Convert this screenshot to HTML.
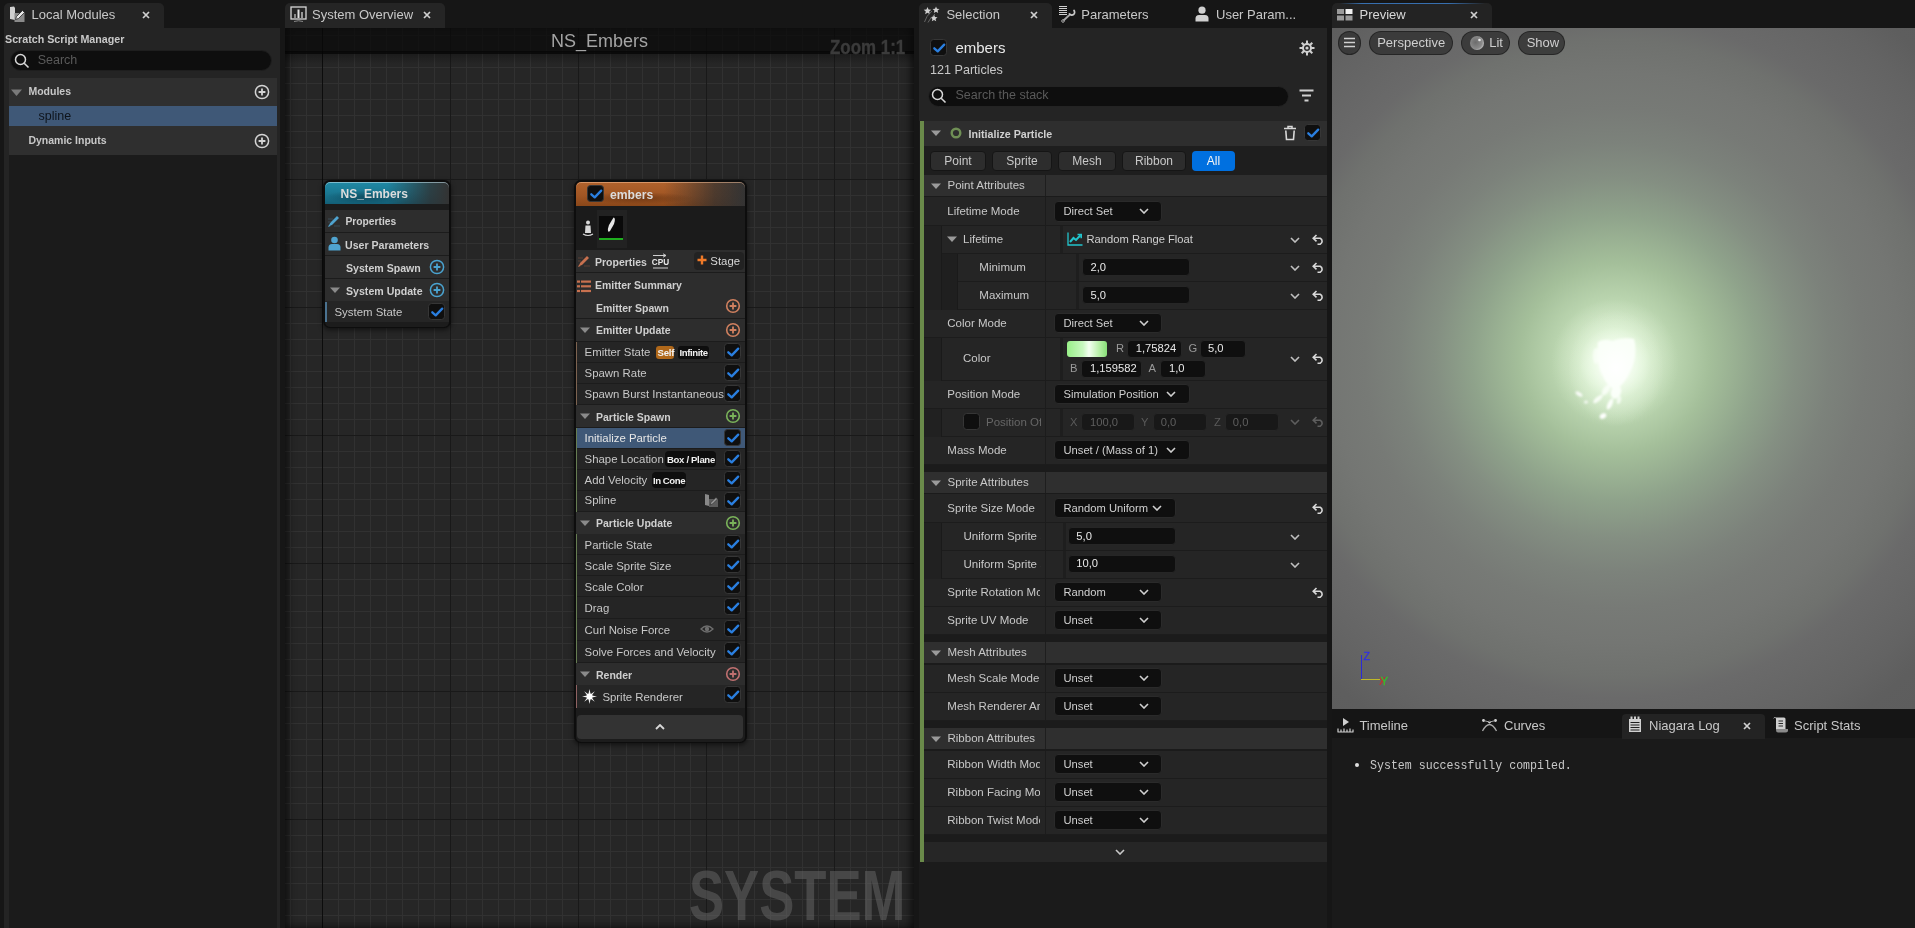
<!DOCTYPE html>
<html><head><meta charset="utf-8">
<style>
*{margin:0;padding:0;box-sizing:border-box}
html,body{width:1915px;height:928px;overflow:hidden;background:#161616;font-family:"Liberation Sans",sans-serif;color:#c0c0c0}
.a{position:absolute}
.t{position:absolute;white-space:nowrap;line-height:1;margin-top:1px}
</style></head><body>

<div style="position:absolute;left:0;top:0;width:1915px;height:928px;will-change:transform">
<div class="a" style="left:4px;top:3px;width:160px;height:25px;background:#242424;border-radius:5px 5px 0 0"></div>
<div class="a" style="left:4px;top:28px;width:276px;height:900px;background:#242424;"></div>
<svg class="a" style="left:8px;top:5px;" width="18" height="18" viewBox="0 0 18 18"><path d="M2 2 L6 1.5 L7 3 L7 15 L2 14 Z" fill="#d0d0d0"/><rect x="6.5" y="8" width="10" height="9" fill="#8a8a8a"/><path d="M7.5 14.5 L8.5 11.5 L14.5 5.5 L16.5 7.5 L10.5 13.5 Z" fill="#e8e8e8" stroke="#2a2a2a" stroke-width=".8"/></svg>
<div class="t" style="left:31.5px;top:6.95px;font-size:13px;color:#c8c8c8;">Local Modules</div>
<svg class="a" style="left:142px;top:11px;" width="8" height="8" viewBox="0 0 8 8"><path d="M1 1L7 7M7 1L1 7" stroke="#d0d0d0" stroke-width="1.7"/></svg>
<div class="t" style="left:5px;top:32.91px;font-size:10.7px;color:#c8c8c8;font-weight:bold;">Scratch Script Manager</div>
<div class="a" style="left:10px;top:50px;width:262px;height:21px;background:#0e0e0e;border-radius:11px;border:1px solid #1e1e1e"></div>
<svg class="a" style="left:14px;top:53px;" width="16" height="16" viewBox="0 0 16 16"><circle cx="6.5" cy="6.5" r="5" fill="none" stroke="#d8d8d8" stroke-width="1.5"/><path d="M10.2 10.2L14.5 14.5" stroke="#d8d8d8" stroke-width="1.6"/></svg>
<div class="t" style="left:37.7px;top:53.38px;font-size:12.5px;color:#5a5a5a;">Search</div>
<div class="a" style="left:9px;top:78px;width:268px;height:850px;background:#1b1b1b;"></div>
<div class="a" style="left:9px;top:78px;width:268px;height:28px;background:#2f2f2f;"></div>
<div class="a" style="left:9px;top:106px;width:268px;height:20px;background:#3f5877;"></div>
<div class="a" style="left:9px;top:126px;width:268px;height:29px;background:#2f2f2f;"></div>
<svg class="a" style="left:11px;top:89px;" width="11" height="7" viewBox="0 0 11 7"><path d="M0 0.5L11 0.5L5.5 7Z" fill="#7a7a7a"/></svg>
<div class="t" style="left:28.4px;top:85.08px;font-size:10.5px;color:#c8c8c8;font-weight:bold;">Modules</div>
<div class="t" style="left:38.5px;top:109.38px;font-size:12.5px;color:#0e141c;">spline</div>
<div class="t" style="left:28.4px;top:134.07px;font-size:10.5px;color:#c8c8c8;font-weight:bold;">Dynamic Inputs</div>
<svg class="a" style="left:254px;top:84px;" width="16" height="16" viewBox="0 0 16 16"><circle cx="8" cy="8" r="6.6" fill="none" stroke="#d4d4d4" stroke-width="1.5"/><path d="M8 4.6V11.4M4.6 8H11.4" stroke="#d4d4d4" stroke-width="1.8"/></svg>
<svg class="a" style="left:254px;top:133px;" width="16" height="16" viewBox="0 0 16 16"><circle cx="8" cy="8" r="6.6" fill="none" stroke="#d4d4d4" stroke-width="1.5"/><path d="M8 4.6V11.4M4.6 8H11.4" stroke="#d4d4d4" stroke-width="1.8"/></svg>
<div class="a" style="left:285px;top:3px;width:160px;height:25px;background:#252525;border-radius:5px 5px 0 0"></div>
<svg class="a" style="left:290px;top:6px;" width="17" height="17" viewBox="0 0 17 17"><rect x="1" y="1" width="15" height="12" fill="none" stroke="#d8d8d8" stroke-width="1.3"/><rect x="4" y="8" width="2" height="4" fill="#888"/><rect x="7.5" y="3.5" width="2" height="8.5" fill="#e0e0e0"/><rect x="11" y="6" width="2" height="6" fill="#999"/><path d="M4 15.5Q8.5 14 13 15.5" stroke="#888" stroke-width="1" fill="none"/></svg>
<div class="t" style="left:312px;top:6.95px;font-size:13px;color:#c8c8c8;">System Overview</div>
<svg class="a" style="left:423px;top:11px;" width="8" height="8" viewBox="0 0 8 8"><path d="M1 1L7 7M7 1L1 7" stroke="#d0d0d0" stroke-width="1.7"/></svg>
<div class="a" style="left:285px;top:28px;width:629px;height:900px;background-color:#262626;
background-image:linear-gradient(to right,#0c0c0c 1px,transparent 1px),linear-gradient(to right,#191919 1px,transparent 1px),linear-gradient(to bottom,#191919 1px,transparent 1px),linear-gradient(to right,#313131 1px,transparent 1px),linear-gradient(to bottom,#313131 1px,transparent 1px);
background-size:1px 100%,128px 100%,100% 128px,16px 100%,100% 16px;background-position:37px 0,37px 0,0 23px,5px 0,0 7px;background-repeat:no-repeat,repeat,repeat,repeat,repeat"></div>
<div class="a" style="left:285px;top:28px;width:629px;height:900px;background:transparent;box-shadow:inset 7px 0 7px -3px rgba(0,0,0,.5),inset -7px 0 7px -3px rgba(0,0,0,.5),inset 0 -5px 6px -3px rgba(0,0,0,.25)"></div>
<div class="a" style="left:285px;top:54px;width:629px;height:10px;background:linear-gradient(rgba(0,0,0,.28),rgba(0,0,0,0));"></div>
<div class="a" style="left:285px;top:28px;width:629px;height:26px;background:rgba(8,8,8,.72);border-bottom:3px solid rgba(0,0,0,.35)"></div>
<div class="t" style="left:551px;top:30.70px;font-size:18px;color:#a4a4a4;">NS_Embers</div>
<div class="t" style="left:830px;top:35.58px;font-size:20.5px;color:#3b3b3b;font-weight:bold;transform:scaleX(.825);transform-origin:0 0;-webkit-text-stroke:.4px #3b3b3b">Zoom 1:1</div>
<div class="t" style="left:689px;top:859.83px;font-size:70.2px;color:rgba(112,112,112,.45);font-weight:bold;transform:scaleX(.75);transform-origin:0 0">SYSTEM</div>
<div class="a" style="left:322.5px;top:180px;width:128.5px;height:148px;background:#0d0d0d;border-radius:7px;box-shadow:0 2px 5px rgba(0,0,0,.55)"></div>
<div class="a" style="left:325px;top:182px;width:124px;height:145px;background:#1c1c1c;border-radius:5px"></div>
<div class="a" style="left:325px;top:182px;width:124px;height:22px;background:radial-gradient(ellipse 40px 7px at 40px 15px,rgba(0,20,30,.35),rgba(0,20,30,0)),linear-gradient(to right,rgba(42,42,42,0) 0%,rgba(42,42,42,0) 50%,rgba(48,48,48,.8) 85%,#333 100%),linear-gradient(to bottom,#2089a5 0%,#1a7892 50%,#135f77 100%);border-radius:5px 5px 0 0;box-shadow:inset 0 1px 0 rgba(200,230,240,.55)"></div>
<div class="t" style="left:340.6px;top:186.80px;font-size:12px;color:#dcdcdc;font-weight:bold;">NS_Embers</div>
<div class="a" style="left:325px;top:210px;width:124px;height:22px;background:#2d2d2d;"></div>
<div class="a" style="left:325px;top:233px;width:124px;height:22px;background:#2d2d2d;"></div>
<div class="a" style="left:325px;top:256px;width:124px;height:22px;background:#2d2d2d;"></div>
<div class="a" style="left:325px;top:279px;width:124px;height:22px;background:#2d2d2d;"></div>
<div class="a" style="left:325px;top:301px;width:124px;height:21px;background:#252525;"></div>
<div class="a" style="left:325px;top:302px;width:2px;height:20px;background:#4a7290;"></div>
<svg class="a" style="left:327px;top:214px;" width="14" height="14" viewBox="0 0 14 14"><path d="M2 12L3 9L10 2L12 4L5 11Z" fill="#4fa3cf"/><path d="M1 13L2.2 10.5L3.6 11.9Z" fill="#4fa3cf"/><path d="M1 5H6M1 8H4M7 12H13" stroke="#3a4a55" stroke-width="1"/></svg>
<div class="t" style="left:345.4px;top:215.94px;font-size:10.3px;color:#cfcfcf;font-weight:bold;">Properties</div>
<svg class="a" style="left:328px;top:236px;" width="13" height="15" viewBox="0 0 13 15"><circle cx="6.5" cy="4" r="3.3" fill="#4fa3cf"/><path d="M0.5 14.5V11.5Q0.5 8 4 8H9Q12.5 8 12.5 11.5V14.5Z" fill="#4fa3cf"/></svg>
<div class="t" style="left:345px;top:238.59px;font-size:10.6px;color:#cfcfcf;font-weight:bold;">User Parameters</div>
<div class="t" style="left:346px;top:261.89px;font-size:10.6px;color:#cfcfcf;font-weight:bold;">System Spawn</div>
<svg class="a" style="left:429px;top:259px;" width="16" height="16" viewBox="0 0 16 16"><circle cx="8" cy="8" r="6.6" fill="none" stroke="#4aa3d0" stroke-width="1.5"/><path d="M8 4.6V11.4M4.6 8H11.4" stroke="#4aa3d0" stroke-width="1.8"/></svg>
<svg class="a" style="left:330px;top:287px;" width="10" height="6" viewBox="0 0 10 6"><path d="M0 0.5L10 0.5L5.0 6Z" fill="#8a8a8a"/></svg>
<div class="t" style="left:346px;top:284.59px;font-size:10.6px;color:#cfcfcf;font-weight:bold;">System Update</div>
<svg class="a" style="left:429px;top:282px;" width="16" height="16" viewBox="0 0 16 16"><circle cx="8" cy="8" r="6.6" fill="none" stroke="#4aa3d0" stroke-width="1.5"/><path d="M8 4.6V11.4M4.6 8H11.4" stroke="#4aa3d0" stroke-width="1.8"/></svg>
<div class="t" style="left:334.5px;top:306.31px;font-size:11.4px;color:#c8c8c8;">System State</div>
<svg class="a" style="left:428.3px;top:303.2px;" width="17" height="17" viewBox="0 0 17 17"><rect x="0.5" y="0.5" width="16" height="16" rx="3" fill="#0f0f0f" stroke="#363636" stroke-width="1"/><path d="M4.3 9.3L7.7 12.4L14.2 5.6" fill="none" stroke="#2a7fe0" stroke-width="2.3" stroke-linecap="round" stroke-linejoin="round"/></svg>
<div class="a" style="left:573.5px;top:180px;width:173.5px;height:563px;background:#0d0d0d;border-radius:7px;box-shadow:0 2px 5px rgba(0,0,0,.55)"></div>
<div class="a" style="left:575.5px;top:182px;width:169.5px;height:560px;background:#1c1c1c;border-radius:5px"></div>
<div class="a" style="left:575.5px;top:182px;width:169.5px;height:24px;background:radial-gradient(ellipse 55px 6px at 62px 16px,rgba(40,15,0,.35),rgba(40,15,0,0)),linear-gradient(to right,rgba(42,42,42,0) 0%,rgba(42,42,42,0) 52%,rgba(48,48,48,.75) 82%,#333 100%),linear-gradient(to bottom,#b0622c 0%,#a15624 55%,#8a4719 100%);border-radius:5px 5px 0 0;box-shadow:inset 0 1px 0 rgba(255,200,160,.5)"></div>
<svg class="a" style="left:587.3px;top:185.2px;" width="17" height="17" viewBox="0 0 17 17"><rect x="0.5" y="0.5" width="16" height="16" rx="3" fill="#0f0f0f" stroke="#363636" stroke-width="1"/><path d="M4.3 9.3L7.7 12.4L14.2 5.6" fill="none" stroke="#2a7fe0" stroke-width="2.3" stroke-linecap="round" stroke-linejoin="round"/></svg>
<div class="t" style="left:610px;top:187.63px;font-size:12.2px;color:#dcdcdc;font-weight:bold;">embers</div>
<div class="a" style="left:575.5px;top:206px;width:169.5px;height:44px;background:#1b1b1b;"></div>
<div class="a" style="left:597px;top:210px;width:30px;height:38px;background:#222222;"></div>
<div class="a" style="left:599px;top:216px;width:24px;height:22px;background:#0a0a0a;"></div>
<div class="a" style="left:599px;top:238px;width:24px;height:2px;background:#1fae1f;"></div>
<svg class="a" style="left:603px;top:216px;" width="16" height="20" viewBox="0 0 16 20"><path d="M10.5 1.5Q13 2 11 8L7 15Q5.5 16.5 5 15Q4.5 13 6 9Z" fill="#e6e6e6"/></svg>
<svg class="a" style="left:582px;top:220px;" width="12" height="17" viewBox="0 0 12 17"><circle cx="6" cy="2.6" r="2" fill="#d8d8d8"/><path d="M3.5 5.5H8.5L9 13H3Z" fill="#d8d8d8"/><path d="M1 14Q6 17 11 14" stroke="#d8d8d8" stroke-width="1.2" fill="none"/></svg>
<div class="a" style="left:575.5px;top:250px;width:169.5px;height:22px;background:#2d2d2d;"></div>
<svg class="a" style="left:577px;top:254px;" width="14" height="14" viewBox="0 0 14 14"><path d="M2 12L3 9L10 2L12 4L5 11Z" fill="#c8714f"/><path d="M1 13L2.2 10.5L3.6 11.9Z" fill="#c8714f"/><path d="M1 4H6M1 7H4M7 12H13" stroke="#5a4036" stroke-width="1"/></svg>
<div class="t" style="left:595px;top:256.07px;font-size:10.5px;color:#cfcfcf;font-weight:bold;">Properties</div>
<svg class="a" style="left:652px;top:253px;" width="17" height="16" viewBox="0 0 17 16"><path d="M1 2.5H14M11 0.8L14 2.5L11 4.2" stroke="#cfcfcf" stroke-width="1" fill="none"/><text x="8.5" y="12.3" font-family="Liberation Sans" font-weight="bold" font-size="8.2" fill="#e8e8e8" text-anchor="middle">CPU</text><path d="M1 15H16" stroke="#cfcfcf" stroke-width="1"/></svg>
<div class="a" style="left:694px;top:252px;width:50px;height:18px;background:#222222;border-radius:4px"></div>
<svg class="a" style="left:697px;top:255px;" width="10" height="10" viewBox="0 0 10 10"><path d="M5 0.5V9.5M0.5 5H9.5" stroke="#f07a28" stroke-width="2.4"/></svg>
<div class="t" style="left:710.3px;top:255.31px;font-size:11.4px;color:#d8d8d8;">Stage</div>
<div class="a" style="left:575.5px;top:273px;width:169.5px;height:22px;background:#2d2d2d;"></div>
<svg class="a" style="left:577px;top:279.5px;" width="14" height="13" viewBox="0 0 14 13"><rect x="0" y="0.5" width="3" height="2.2" fill="#c8714f"/><rect x="4" y="0.5" width="10" height="2.2" fill="#c8714f"/><rect x="0" y="5.2" width="3" height="2.2" fill="#c8714f"/><rect x="4" y="5.2" width="10" height="2.2" fill="#c8714f"/><rect x="0" y="9.9" width="3" height="2.2" fill="#c8714f"/><rect x="4" y="9.9" width="10" height="2.2" fill="#c8714f"/></svg>
<div class="t" style="left:595px;top:278.57px;font-size:10.5px;color:#cfcfcf;font-weight:bold;">Emitter Summary</div>
<div class="a" style="left:575.5px;top:295px;width:169.5px;height:23px;background:#2d2d2d;"></div>
<div class="t" style="left:596px;top:301.77px;font-size:10.5px;color:#cfcfcf;font-weight:bold;">Emitter Spawn</div>
<svg class="a" style="left:725px;top:298.2px;" width="16" height="16" viewBox="0 0 16 16"><circle cx="8" cy="8" r="6.3" fill="none" stroke="#d0805f" stroke-width="1.6"/><path d="M8 4.6V11.4M4.6 8H11.4" stroke="#d0805f" stroke-width="1.8"/></svg>
<div class="a" style="left:575.5px;top:319px;width:169.5px;height:22px;background:#2d2d2d;"></div>
<svg class="a" style="left:580px;top:327px;" width="10" height="6" viewBox="0 0 10 6"><path d="M0 0.5L10 0.5L5.0 6Z" fill="#8a8a8a"/></svg>
<div class="t" style="left:596px;top:324.38px;font-size:10.5px;color:#cfcfcf;font-weight:bold;">Emitter Update</div>
<svg class="a" style="left:725px;top:321.7px;" width="16" height="16" viewBox="0 0 16 16"><circle cx="8" cy="8" r="6.3" fill="none" stroke="#d0805f" stroke-width="1.6"/><path d="M8 4.6V11.4M4.6 8H11.4" stroke="#d0805f" stroke-width="1.8"/></svg>
<div class="a" style="left:575.5px;top:342px;width:169.5px;height:20px;background:#252525;"></div>
<div class="t" style="left:584.6px;top:346.31px;font-size:11.4px;color:#c8c8c8;">Emitter State</div>
<svg class="a" style="left:724.3px;top:343.2px;" width="17" height="17" viewBox="0 0 17 17"><rect x="0.5" y="0.5" width="16" height="16" rx="3" fill="#0f0f0f" stroke="#363636" stroke-width="1"/><path d="M4.3 9.3L7.7 12.4L14.2 5.6" fill="none" stroke="#2a7fe0" stroke-width="2.3" stroke-linecap="round" stroke-linejoin="round"/></svg>
<div class="a" style="left:575.5px;top:363px;width:169.5px;height:20px;background:#252525;"></div>
<div class="t" style="left:584.6px;top:366.71px;font-size:11.4px;color:#c8c8c8;">Spawn Rate</div>
<svg class="a" style="left:724.3px;top:364.2px;" width="17" height="17" viewBox="0 0 17 17"><rect x="0.5" y="0.5" width="16" height="16" rx="3" fill="#0f0f0f" stroke="#363636" stroke-width="1"/><path d="M4.3 9.3L7.7 12.4L14.2 5.6" fill="none" stroke="#2a7fe0" stroke-width="2.3" stroke-linecap="round" stroke-linejoin="round"/></svg>
<div class="a" style="left:575.5px;top:384px;width:169.5px;height:20px;background:#252525;"></div>
<div class="t" style="left:584.6px;top:387.71px;font-size:11.4px;color:#c8c8c8;">Spawn Burst Instantaneous</div>
<svg class="a" style="left:724.3px;top:385.2px;" width="17" height="17" viewBox="0 0 17 17"><rect x="0.5" y="0.5" width="16" height="16" rx="3" fill="#0f0f0f" stroke="#363636" stroke-width="1"/><path d="M4.3 9.3L7.7 12.4L14.2 5.6" fill="none" stroke="#2a7fe0" stroke-width="2.3" stroke-linecap="round" stroke-linejoin="round"/></svg>
<div class="a" style="left:656px;top:346px;width:18px;height:13px;background:#b0681a;border-radius:3px"></div>
<div class="t" style="left:657.5px;top:347.34px;font-size:9.6px;color:#f4f4f4;font-weight:bold;letter-spacing:-.2px">Self</div>
<div class="a" style="left:677.5px;top:346px;width:31px;height:13px;background:#0e0e0e;border-radius:3px"></div>
<div class="t" style="left:679.5px;top:347.34px;font-size:9.6px;color:#f0f0f0;font-weight:bold;letter-spacing:-.4px">Infinite</div>
<div class="a" style="left:575.5px;top:405px;width:169.5px;height:22px;background:#2d2d2d;"></div>
<svg class="a" style="left:580px;top:413px;" width="10" height="6" viewBox="0 0 10 6"><path d="M0 0.5L10 0.5L5.0 6Z" fill="#8a8a8a"/></svg>
<div class="t" style="left:596px;top:410.77px;font-size:10.5px;color:#cfcfcf;font-weight:bold;">Particle Spawn</div>
<svg class="a" style="left:725px;top:407.7px;" width="16" height="16" viewBox="0 0 16 16"><circle cx="8" cy="8" r="6.3" fill="none" stroke="#7ab35a" stroke-width="1.6"/><path d="M8 4.6V11.4M4.6 8H11.4" stroke="#7ab35a" stroke-width="1.8"/></svg>
<div class="a" style="left:575.5px;top:428px;width:169.5px;height:20px;background:#3f5877;"></div>
<div class="t" style="left:584.6px;top:432.01px;font-size:11.4px;color:#e6e6e6;">Initialize Particle</div>
<svg class="a" style="left:724.3px;top:429.2px;" width="17" height="17" viewBox="0 0 17 17"><rect x="0.5" y="0.5" width="16" height="16" rx="3" fill="#0f0f0f" stroke="#363636" stroke-width="1"/><path d="M4.3 9.3L7.7 12.4L14.2 5.6" fill="none" stroke="#2a7fe0" stroke-width="2.3" stroke-linecap="round" stroke-linejoin="round"/></svg>
<div class="a" style="left:575.5px;top:449px;width:169.5px;height:20px;background:#252525;"></div>
<div class="t" style="left:584.6px;top:453.01px;font-size:11.4px;color:#c8c8c8;">Shape Location</div>
<svg class="a" style="left:724.3px;top:450.2px;" width="17" height="17" viewBox="0 0 17 17"><rect x="0.5" y="0.5" width="16" height="16" rx="3" fill="#0f0f0f" stroke="#363636" stroke-width="1"/><path d="M4.3 9.3L7.7 12.4L14.2 5.6" fill="none" stroke="#2a7fe0" stroke-width="2.3" stroke-linecap="round" stroke-linejoin="round"/></svg>
<div class="a" style="left:665px;top:451px;width:50.5px;height:16px;background:#0e0e0e;border-radius:4px"></div>
<div class="t" style="left:667px;top:454.14px;font-size:9.6px;color:#f0f0f0;font-weight:bold;letter-spacing:-.35px">Box / Plane</div>
<div class="a" style="left:575.5px;top:470px;width:169.5px;height:20px;background:#252525;"></div>
<div class="t" style="left:584.6px;top:473.71px;font-size:11.4px;color:#c8c8c8;">Add Velocity</div>
<svg class="a" style="left:724.3px;top:471.2px;" width="17" height="17" viewBox="0 0 17 17"><rect x="0.5" y="0.5" width="16" height="16" rx="3" fill="#0f0f0f" stroke="#363636" stroke-width="1"/><path d="M4.3 9.3L7.7 12.4L14.2 5.6" fill="none" stroke="#2a7fe0" stroke-width="2.3" stroke-linecap="round" stroke-linejoin="round"/></svg>
<div class="a" style="left:651.5px;top:472px;width:34px;height:16px;background:#0e0e0e;border-radius:4px"></div>
<div class="t" style="left:653px;top:475.14px;font-size:9.6px;color:#f0f0f0;font-weight:bold;letter-spacing:-.45px">In Cone</div>
<div class="a" style="left:575.5px;top:491px;width:169.5px;height:20px;background:#252525;"></div>
<div class="t" style="left:584.6px;top:494.31px;font-size:11.4px;color:#c8c8c8;">Spline</div>
<svg class="a" style="left:724.3px;top:492.2px;" width="17" height="17" viewBox="0 0 17 17"><rect x="0.5" y="0.5" width="16" height="16" rx="3" fill="#0f0f0f" stroke="#363636" stroke-width="1"/><path d="M4.3 9.3L7.7 12.4L14.2 5.6" fill="none" stroke="#2a7fe0" stroke-width="2.3" stroke-linecap="round" stroke-linejoin="round"/></svg>
<svg class="a" style="left:704px;top:493px;" width="15" height="15" viewBox="0 0 15 15"><path d="M1 1L5 2V13L1 12Z" fill="#888"/><rect x="5" y="6" width="9" height="8" fill="#5c5c5c"/><path d="M6 12L7 9.5L12 4.5L13.5 6L8.5 11Z" fill="#9a9a9a" stroke="#2a2a2a" stroke-width=".6"/></svg>
<div class="a" style="left:575.5px;top:512px;width:169.5px;height:22px;background:#2d2d2d;"></div>
<svg class="a" style="left:580px;top:520px;" width="10" height="6" viewBox="0 0 10 6"><path d="M0 0.5L10 0.5L5.0 6Z" fill="#8a8a8a"/></svg>
<div class="t" style="left:596px;top:517.38px;font-size:10.5px;color:#cfcfcf;font-weight:bold;">Particle Update</div>
<svg class="a" style="left:725px;top:514.7px;" width="16" height="16" viewBox="0 0 16 16"><circle cx="8" cy="8" r="6.3" fill="none" stroke="#7ab35a" stroke-width="1.6"/><path d="M8 4.6V11.4M4.6 8H11.4" stroke="#7ab35a" stroke-width="1.8"/></svg>
<div class="a" style="left:575.5px;top:534px;width:169.5px;height:20px;background:#252525;"></div>
<div class="t" style="left:584.6px;top:538.61px;font-size:11.4px;color:#c8c8c8;">Particle State</div>
<svg class="a" style="left:724.3px;top:535.2px;" width="17" height="17" viewBox="0 0 17 17"><rect x="0.5" y="0.5" width="16" height="16" rx="3" fill="#0f0f0f" stroke="#363636" stroke-width="1"/><path d="M4.3 9.3L7.7 12.4L14.2 5.6" fill="none" stroke="#2a7fe0" stroke-width="2.3" stroke-linecap="round" stroke-linejoin="round"/></svg>
<div class="a" style="left:575.5px;top:555px;width:169.5px;height:20px;background:#252525;"></div>
<div class="t" style="left:584.6px;top:559.71px;font-size:11.4px;color:#c8c8c8;">Scale Sprite Size</div>
<svg class="a" style="left:724.3px;top:556.2px;" width="17" height="17" viewBox="0 0 17 17"><rect x="0.5" y="0.5" width="16" height="16" rx="3" fill="#0f0f0f" stroke="#363636" stroke-width="1"/><path d="M4.3 9.3L7.7 12.4L14.2 5.6" fill="none" stroke="#2a7fe0" stroke-width="2.3" stroke-linecap="round" stroke-linejoin="round"/></svg>
<div class="a" style="left:575.5px;top:576px;width:169.5px;height:20px;background:#252525;"></div>
<div class="t" style="left:584.6px;top:580.71px;font-size:11.4px;color:#c8c8c8;">Scale Color</div>
<svg class="a" style="left:724.3px;top:577.2px;" width="17" height="17" viewBox="0 0 17 17"><rect x="0.5" y="0.5" width="16" height="16" rx="3" fill="#0f0f0f" stroke="#363636" stroke-width="1"/><path d="M4.3 9.3L7.7 12.4L14.2 5.6" fill="none" stroke="#2a7fe0" stroke-width="2.3" stroke-linecap="round" stroke-linejoin="round"/></svg>
<div class="a" style="left:575.5px;top:597px;width:169.5px;height:21px;background:#252525;"></div>
<div class="t" style="left:584.6px;top:601.61px;font-size:11.4px;color:#c8c8c8;">Drag</div>
<svg class="a" style="left:724.3px;top:598.2px;" width="17" height="17" viewBox="0 0 17 17"><rect x="0.5" y="0.5" width="16" height="16" rx="3" fill="#0f0f0f" stroke="#363636" stroke-width="1"/><path d="M4.3 9.3L7.7 12.4L14.2 5.6" fill="none" stroke="#2a7fe0" stroke-width="2.3" stroke-linecap="round" stroke-linejoin="round"/></svg>
<div class="a" style="left:575.5px;top:619px;width:169.5px;height:21px;background:#252525;"></div>
<div class="t" style="left:584.6px;top:624.01px;font-size:11.4px;color:#c8c8c8;">Curl Noise Force</div>
<svg class="a" style="left:724.3px;top:620.2px;" width="17" height="17" viewBox="0 0 17 17"><rect x="0.5" y="0.5" width="16" height="16" rx="3" fill="#0f0f0f" stroke="#363636" stroke-width="1"/><path d="M4.3 9.3L7.7 12.4L14.2 5.6" fill="none" stroke="#2a7fe0" stroke-width="2.3" stroke-linecap="round" stroke-linejoin="round"/></svg>
<svg class="a" style="left:700px;top:624px;" width="14" height="10" viewBox="0 0 14 10"><path d="M1 5Q7 -1 13 5Q7 11 1 5Z" fill="none" stroke="#6e6e6e" stroke-width="1.3"/><circle cx="7" cy="5" r="2.2" fill="#6e6e6e"/></svg>
<div class="a" style="left:575.5px;top:641px;width:169.5px;height:21px;background:#252525;"></div>
<div class="t" style="left:584.6px;top:645.51px;font-size:11.4px;color:#c8c8c8;">Solve Forces and Velocity</div>
<svg class="a" style="left:724.3px;top:642.2px;" width="17" height="17" viewBox="0 0 17 17"><rect x="0.5" y="0.5" width="16" height="16" rx="3" fill="#0f0f0f" stroke="#363636" stroke-width="1"/><path d="M4.3 9.3L7.7 12.4L14.2 5.6" fill="none" stroke="#2a7fe0" stroke-width="2.3" stroke-linecap="round" stroke-linejoin="round"/></svg>
<div class="a" style="left:575.5px;top:663px;width:169.5px;height:22px;background:#2d2d2d;"></div>
<svg class="a" style="left:580px;top:671px;" width="10" height="6" viewBox="0 0 10 6"><path d="M0 0.5L10 0.5L5.0 6Z" fill="#8a8a8a"/></svg>
<div class="t" style="left:596px;top:668.68px;font-size:10.5px;color:#cfcfcf;font-weight:bold;">Render</div>
<svg class="a" style="left:725px;top:665.7px;" width="16" height="16" viewBox="0 0 16 16"><circle cx="8" cy="8" r="6.3" fill="none" stroke="#c07070" stroke-width="1.6"/><path d="M8 4.6V11.4M4.6 8H11.4" stroke="#c07070" stroke-width="1.8"/></svg>
<div class="a" style="left:575.5px;top:685px;width:169.5px;height:23px;background:#252525;"></div>
<div class="t" style="left:602.4px;top:690.81px;font-size:11.4px;color:#c8c8c8;">Sprite Renderer</div>
<svg class="a" style="left:724.3px;top:686.2px;" width="17" height="17" viewBox="0 0 17 17"><rect x="0.5" y="0.5" width="16" height="16" rx="3" fill="#0f0f0f" stroke="#363636" stroke-width="1"/><path d="M4.3 9.3L7.7 12.4L14.2 5.6" fill="none" stroke="#2a7fe0" stroke-width="2.3" stroke-linecap="round" stroke-linejoin="round"/></svg>
<svg class="a" style="left:582px;top:689px;" width="15" height="15" viewBox="0 0 15 15"><path d="M7.5 0L8.6 5.2L12.8 2.2L9.8 6.4L15 7.5L9.8 8.6L12.8 12.8L8.6 9.8L7.5 15L6.4 9.8L2.2 12.8L5.2 8.6L0 7.5L5.2 6.4L2.2 2.2L6.4 5.2Z" fill="#f0f0f0"/><circle cx="7.5" cy="7.5" r="3" fill="#fff"/></svg>
<div class="a" style="left:577px;top:715px;width:166px;height:24px;background:#333333;border-radius:4px"></div>
<div class="a" style="left:575.5px;top:342px;width:1.6px;height:63px;background:#7d6350;"></div>
<div class="a" style="left:575.5px;top:428px;width:1.6px;height:84px;background:#667d52;"></div>
<div class="a" style="left:575.5px;top:534px;width:1.6px;height:129px;background:#667d52;"></div>
<div class="a" style="left:575.5px;top:685px;width:1.6px;height:23px;background:#8f6262;"></div>
<svg class="a" style="left:655px;top:724px;" width="10" height="6" viewBox="0 0 10 6"><path d="M1 5L5 1L9 5" fill="none" stroke="#d8d8d8" stroke-width="1.8"/></svg>
<div class="a" style="left:919px;top:3px;width:133px;height:25px;background:#242424;border-radius:5px 5px 0 0"></div>
<div class="a" style="left:919px;top:28px;width:408px;height:900px;background:#1b1b1b;"></div>
<div class="a" style="left:919px;top:28px;width:408px;height:93px;background:#242424;"></div>
<svg class="a" style="left:923px;top:6px;" width="18" height="17" viewBox="0 0 18 17"><path d="M4.5 1L5.6 3.6L8.3 3.8L6.2 5.5L6.9 8.2L4.5 6.7L2.1 8.2L2.8 5.5L0.7 3.8L3.4 3.6Z" fill="#d0d0d0"/><path d="M13 0.5L14 2.8L16.5 3L14.6 4.6L15.2 7L13 5.7L10.8 7L11.4 4.6L9.5 3L12 2.8Z" fill="#d0d0d0"/><path d="M11 8.8L12 11.1L14.5 11.3L12.6 12.9L13.2 15.3L11 14L8.8 15.3L9.4 12.9L7.5 11.3L10 11.1Z" fill="#d0d0d0"/><path d="M1.5 16Q3 10 9 5M5 16.5Q7 12 12 8" stroke="#777" stroke-width=".8" fill="none"/></svg>
<div class="t" style="left:946.4px;top:6.95px;font-size:13px;color:#c8c8c8;">Selection</div>
<svg class="a" style="left:1030px;top:11px;" width="8" height="8" viewBox="0 0 8 8"><path d="M1 1L7 7M7 1L1 7" stroke="#d0d0d0" stroke-width="1.7"/></svg>
<svg class="a" style="left:1058px;top:5px;" width="18" height="18" viewBox="0 0 18 18"><path d="M1 1.5H9M1 3.5H9M1 5.5H9M1 7.5H9M1 9.5H9" stroke="#d0d0d0" stroke-width="1.1"/><path d="M5.5 15.5L12 9.5" stroke="#a8a8a8" stroke-width="1.8"/><path d="M11.2 8.2A2.8 2.8 0 1 0 15.5 5" fill="none" stroke="#c8c8c8" stroke-width="1.7"/><circle cx="5" cy="16" r="1.3" fill="none" stroke="#a8a8a8" stroke-width="1"/></svg>
<div class="t" style="left:1081.3px;top:6.95px;font-size:13px;color:#c8c8c8;">Parameters</div>
<svg class="a" style="left:1195px;top:6px;" width="14" height="16" viewBox="0 0 14 16"><circle cx="7" cy="4.2" r="3.6" fill="#d0d0d0"/><path d="M0.5 15.5V12.5Q0.5 9 4 9H10Q13.5 9 13.5 12.5V15.5Z" fill="#d0d0d0"/></svg>
<div class="t" style="left:1216px;top:6.95px;font-size:13px;color:#c8c8c8;">User Param...</div>
<svg class="a" style="left:930.3px;top:39.2px;" width="17" height="17" viewBox="0 0 17 17"><rect x="0.5" y="0.5" width="16" height="16" rx="3" fill="#0f0f0f" stroke="#363636" stroke-width="1"/><path d="M4.3 9.3L7.7 12.4L14.2 5.6" fill="none" stroke="#2a7fe0" stroke-width="2.3" stroke-linecap="round" stroke-linejoin="round"/></svg>
<div class="t" style="left:955.4px;top:39.25px;font-size:15px;color:#e8e8e8;">embers</div>
<div class="t" style="left:930px;top:62.99px;font-size:12.6px;color:#c8c8c8;">121 Particles</div>
<svg class="a" style="left:1299px;top:40px;" width="16" height="16" viewBox="0 0 16 16"><g fill="#d0d0d0"><circle cx="8" cy="8" r="5"/><rect x="7" y="0.5" width="2" height="15" /><rect x="0.5" y="7" width="15" height="2"/><rect x="7" y="0.5" width="2" height="15" transform="rotate(45 8 8)"/><rect x="7" y="0.5" width="2" height="15" transform="rotate(-45 8 8)"/></g><circle cx="8" cy="8" r="3" fill="#242424"/><circle cx="8" cy="8" r="1.6" fill="#d0d0d0"/></svg>
<div class="a" style="left:927.5px;top:85.5px;width:361px;height:21px;background:#0e0e0e;border-radius:11px;border:1px solid #232323"></div>
<svg class="a" style="left:931px;top:88px;" width="16" height="16" viewBox="0 0 16 16"><circle cx="6.5" cy="6.5" r="5" fill="none" stroke="#d8d8d8" stroke-width="1.5"/><path d="M10.2 10.2L14.5 14.5" stroke="#d8d8d8" stroke-width="1.6"/></svg>
<div class="t" style="left:955.5px;top:88.17px;font-size:12.5px;color:#5a5a5a;">Search the stack</div>
<svg class="a" style="left:1299px;top:89px;" width="15" height="14" viewBox="0 0 15 14"><path d="M0.5 1.5H14.5M3 6.5H12M5.5 11.5H9.5" stroke="#cfcfcf" stroke-width="2"/></svg>
<div class="a" style="left:920px;top:121px;width:4px;height:741px;background:#6a8a4a;"></div>
<div class="a" style="left:924px;top:121px;width:403px;height:25px;background:#2e2e2e;"></div>
<svg class="a" style="left:931px;top:130px;" width="10" height="6" viewBox="0 0 10 6"><path d="M0 0.5L10 0.5L5.0 6Z" fill="#9a9a9a"/></svg>
<svg class="a" style="left:950px;top:127px;" width="12" height="12" viewBox="0 0 12 12"><circle cx="6" cy="6" r="4.3" fill="none" stroke="#6f8f55" stroke-width="2.4"/></svg>
<div class="t" style="left:968.5px;top:127.91px;font-size:10.7px;color:#d0d0d0;font-weight:bold;">Initialize Particle</div>
<svg class="a" style="left:1283px;top:125px;" width="14" height="16" viewBox="0 0 14 16"><path d="M1 3.5H13M5 3.5V1.5H9V3.5" stroke="#d8d8d8" stroke-width="1.5" fill="none"/><path d="M2.8 5.5L3.5 14.5H10.5L11.2 5.5" stroke="#d8d8d8" stroke-width="1.6" fill="none"/></svg>
<svg class="a" style="left:1304.3px;top:124.2px;" width="17" height="17" viewBox="0 0 17 17"><rect x="0.5" y="0.5" width="16" height="16" rx="3" fill="#0f0f0f" stroke="#363636" stroke-width="1"/><path d="M4.3 9.3L7.7 12.4L14.2 5.6" fill="none" stroke="#2a7fe0" stroke-width="2.3" stroke-linecap="round" stroke-linejoin="round"/></svg>
<div class="a" style="left:924px;top:146px;width:403px;height:29px;background:#1e1e1e;"></div>
<div class="a" style="left:930px;top:151px;width:56px;height:19.5px;background:#2d2d2d;border-radius:4px;border:1px solid #151515"></div>
<div class="t" style="left:930px;width:56px;text-align:center;top:153.80px;font-size:12px;color:#c8c8c8">Point</div>
<div class="a" style="left:992px;top:151px;width:60px;height:19.5px;background:#2d2d2d;border-radius:4px;border:1px solid #151515"></div>
<div class="t" style="left:992px;width:60px;text-align:center;top:153.80px;font-size:12px;color:#c8c8c8">Sprite</div>
<div class="a" style="left:1058px;top:151px;width:58px;height:19.5px;background:#2d2d2d;border-radius:4px;border:1px solid #151515"></div>
<div class="t" style="left:1058px;width:58px;text-align:center;top:153.80px;font-size:12px;color:#c8c8c8">Mesh</div>
<div class="a" style="left:1122px;top:151px;width:64px;height:19.5px;background:#2d2d2d;border-radius:4px;border:1px solid #151515"></div>
<div class="t" style="left:1122px;width:64px;text-align:center;top:153.80px;font-size:12px;color:#c8c8c8">Ribbon</div>
<div class="a" style="left:1192px;top:151px;width:43px;height:19.5px;background:#0070e0;border-radius:4px;"></div>
<div class="t" style="left:1192px;width:43px;text-align:center;top:153.80px;font-size:12px;color:#f4f4f4">All</div>
<div class="a" style="left:924px;top:175px;width:403px;height:21px;background:#2f2f2f;"></div>
<div class="a" style="left:1045px;top:175px;width:1px;height:21px;background:#1e1e1e;"></div>
<svg class="a" style="left:931px;top:183px;" width="10" height="6" viewBox="0 0 10 6"><path d="M0 0.5L10 0.5L5.0 6Z" fill="#9a9a9a"/></svg>
<div class="t" style="left:947.5px;top:179.22px;font-size:11.5px;color:#c8c8c8;">Point Attributes</div>
<div class="a" style="left:924px;top:197px;width:403px;height:28px;background:#252525;"></div>
<div class="a" style="left:924px;top:225px;width:403px;height:1px;background:#1c1c1c;"></div>
<div class="a" style="left:1045px;top:197px;width:1px;height:29px;background:#1c1c1c;"></div>
<div class="t" style="left:947.3px;top:205.22px;font-size:11.5px;color:#c8c8c8;width:2000px;overflow:hidden">Lifetime Mode</div>
<div class="a" style="left:1054px;top:201px;width:108px;height:20.5px;background:#0f0f0f;border-radius:4px;border:1px solid #2a2a2a"></div>
<div class="t" style="left:1063.5px;top:205.48px;font-size:11.2px;color:#d0d0d0;">Direct Set</div>
<svg class="a" style="left:1139px;top:208.3px;" width="10" height="6" viewBox="0 0 10 6"><path d="M1 1L5.0 5L9 1" fill="none" stroke="#d0d0d0" stroke-width="1.6"/></svg>
<div class="a" style="left:924px;top:226px;width:403px;height:27px;background:#252525;"></div>
<div class="a" style="left:924px;top:253px;width:403px;height:1px;background:#1c1c1c;"></div>
<div class="a" style="left:1045px;top:226px;width:1px;height:28px;background:#1c1c1c;"></div>
<div class="a" style="left:924px;top:226px;width:17px;height:28px;background:#212121;"></div>
<div class="a" style="left:941px;top:226px;width:1px;height:28px;background:#1a1a1a;"></div>
<svg class="a" style="left:947px;top:236px;" width="10" height="6" viewBox="0 0 10 6"><path d="M0 0.5L10 0.5L5.0 6Z" fill="#9a9a9a"/></svg>
<div class="t" style="left:963px;top:233.12px;font-size:11.5px;color:#c8c8c8;">Lifetime</div>
<div class="a" style="left:1060px;top:226px;width:3px;height:27px;background:#1e1e1e;"></div>
<svg class="a" style="left:1067px;top:232px;" width="16" height="14" viewBox="0 0 16 14"><path d="M1 0.5V13H15.5" stroke="#22c4cc" stroke-width="1.3" fill="none"/><path d="M3 10L6.5 6L9 8L13.5 3.2" stroke="#22c4cc" stroke-width="2" fill="none"/><path d="M10.5 2.5H14.2V6.2" stroke="#22c4cc" stroke-width="1.6" fill="none"/></svg>
<div class="t" style="left:1086.5px;top:233.48px;font-size:11.2px;color:#d0d0d0;">Random Range Float</div>
<svg class="a" style="left:1290px;top:236.5px;" width="10" height="6" viewBox="0 0 10 6"><path d="M1 1L5.0 5L9 1" fill="none" stroke="#c0c0c0" stroke-width="1.6"/></svg>
<svg class="a" style="left:1312px;top:234px;" width="13" height="11" viewBox="0 0 13 11"><path d="M4.5 1L1.2 4.2L4.5 7.4M1.5 4.2H8.2A3.3 3.3 0 0 1 8.2 10.2H5.5" fill="none" stroke="#d8d8d8" stroke-width="1.6"/></svg>
<div class="a" style="left:924px;top:254px;width:403px;height:27px;background:#252525;"></div>
<div class="a" style="left:924px;top:281px;width:403px;height:1px;background:#1c1c1c;"></div>
<div class="a" style="left:1045px;top:254px;width:1px;height:28px;background:#1c1c1c;"></div>
<div class="a" style="left:924px;top:254px;width:17px;height:28px;background:#212121;"></div>
<div class="a" style="left:941px;top:254px;width:1px;height:28px;background:#1a1a1a;"></div>
<div class="a" style="left:942px;top:254px;width:15px;height:28px;background:#1f1f1f;"></div>
<div class="a" style="left:957px;top:254px;width:1px;height:28px;background:#1a1a1a;"></div>
<div class="t" style="left:979.3px;top:260.93px;font-size:11.5px;color:#c8c8c8;width:2000px;overflow:hidden">Minimum</div>
<div class="a" style="left:1076px;top:254px;width:3px;height:27px;background:#1e1e1e;"></div>
<div class="a" style="left:1082px;top:257.5px;width:108px;height:18.5px;background:#0f0f0f;border-radius:4px;border:1px solid #262626"></div>
<div class="t" style="left:1090.5px;top:261.18px;font-size:11.2px;color:#e8e8e8;">2,0</div>
<svg class="a" style="left:1290px;top:264.5px;" width="10" height="6" viewBox="0 0 10 6"><path d="M1 1L5.0 5L9 1" fill="none" stroke="#c0c0c0" stroke-width="1.6"/></svg>
<svg class="a" style="left:1312px;top:262px;" width="13" height="11" viewBox="0 0 13 11"><path d="M4.5 1L1.2 4.2L4.5 7.4M1.5 4.2H8.2A3.3 3.3 0 0 1 8.2 10.2H5.5" fill="none" stroke="#d8d8d8" stroke-width="1.6"/></svg>
<div class="a" style="left:924px;top:282px;width:403px;height:27px;background:#252525;"></div>
<div class="a" style="left:924px;top:309px;width:403px;height:1px;background:#1c1c1c;"></div>
<div class="a" style="left:1045px;top:282px;width:1px;height:28px;background:#1c1c1c;"></div>
<div class="a" style="left:924px;top:282px;width:17px;height:28px;background:#212121;"></div>
<div class="a" style="left:941px;top:282px;width:1px;height:28px;background:#1a1a1a;"></div>
<div class="a" style="left:942px;top:282px;width:15px;height:28px;background:#1f1f1f;"></div>
<div class="a" style="left:957px;top:282px;width:1px;height:28px;background:#1a1a1a;"></div>
<div class="t" style="left:979.3px;top:288.73px;font-size:11.5px;color:#c8c8c8;width:2000px;overflow:hidden">Maximum</div>
<div class="a" style="left:1076px;top:282px;width:3px;height:27px;background:#1e1e1e;"></div>
<div class="a" style="left:1082px;top:285.5px;width:108px;height:18.5px;background:#0f0f0f;border-radius:4px;border:1px solid #262626"></div>
<div class="t" style="left:1090.5px;top:288.98px;font-size:11.2px;color:#e8e8e8;">5,0</div>
<svg class="a" style="left:1290px;top:292.5px;" width="10" height="6" viewBox="0 0 10 6"><path d="M1 1L5.0 5L9 1" fill="none" stroke="#c0c0c0" stroke-width="1.6"/></svg>
<svg class="a" style="left:1312px;top:290px;" width="13" height="11" viewBox="0 0 13 11"><path d="M4.5 1L1.2 4.2L4.5 7.4M1.5 4.2H8.2A3.3 3.3 0 0 1 8.2 10.2H5.5" fill="none" stroke="#d8d8d8" stroke-width="1.6"/></svg>
<div class="a" style="left:924px;top:310px;width:403px;height:27px;background:#252525;"></div>
<div class="a" style="left:924px;top:337px;width:403px;height:1px;background:#1c1c1c;"></div>
<div class="a" style="left:1045px;top:310px;width:1px;height:28px;background:#1c1c1c;"></div>
<div class="t" style="left:947.3px;top:317.23px;font-size:11.5px;color:#c8c8c8;width:2000px;overflow:hidden">Color Mode</div>
<div class="a" style="left:1054px;top:313px;width:108px;height:20px;background:#0f0f0f;border-radius:4px;border:1px solid #2a2a2a"></div>
<div class="t" style="left:1063.5px;top:317.48px;font-size:11.2px;color:#d0d0d0;">Direct Set</div>
<svg class="a" style="left:1139px;top:320.3px;" width="10" height="6" viewBox="0 0 10 6"><path d="M1 1L5.0 5L9 1" fill="none" stroke="#d0d0d0" stroke-width="1.6"/></svg>
<div class="a" style="left:924px;top:338px;width:403px;height:42px;background:#252525;"></div>
<div class="a" style="left:924px;top:380px;width:403px;height:1px;background:#1c1c1c;"></div>
<div class="a" style="left:1045px;top:338px;width:1px;height:43px;background:#1c1c1c;"></div>
<div class="a" style="left:924px;top:338px;width:17px;height:43px;background:#212121;"></div>
<div class="a" style="left:941px;top:338px;width:1px;height:43px;background:#1a1a1a;"></div>
<div class="t" style="left:963px;top:352.12px;font-size:11.5px;color:#c8c8c8;">Color</div>
<div class="a" style="left:1060px;top:338px;width:3px;height:42px;background:#1e1e1e;"></div>
<div class="a" style="left:1066.5px;top:340.5px;width:40.5px;height:16.5px;background:linear-gradient(to right,#98f088 0%,#c8f8c0 40%,#f4fff2 55%,#b8f0a8 80%,#88e078 100%);border-radius:3px"></div>
<div class="t" style="left:1116px;top:342.38px;font-size:11.2px;color:#9a9a9a;">R</div>
<div class="a" style="left:1127px;top:339.5px;width:54.5px;height:18.0px;background:#0f0f0f;border-radius:4px;border:1px solid #262626"></div>
<div class="t" style="left:1135.7px;top:342.38px;font-size:11.2px;color:#e8e8e8;">1,75824</div>
<div class="t" style="left:1188.6px;top:342.38px;font-size:11.2px;color:#9a9a9a;">G</div>
<div class="a" style="left:1200px;top:339.5px;width:46px;height:18.0px;background:#0f0f0f;border-radius:4px;border:1px solid #262626"></div>
<div class="t" style="left:1208px;top:342.38px;font-size:11.2px;color:#e8e8e8;">5,0</div>
<div class="t" style="left:1070px;top:362.38px;font-size:11.2px;color:#9a9a9a;">B</div>
<div class="a" style="left:1081px;top:360px;width:60.5px;height:17.5px;background:#0f0f0f;border-radius:4px;border:1px solid #262626"></div>
<div class="t" style="left:1090px;top:362.38px;font-size:11.2px;color:#e8e8e8;">1,159582</div>
<div class="t" style="left:1148.6px;top:362.38px;font-size:11.2px;color:#9a9a9a;">A</div>
<div class="a" style="left:1160px;top:360px;width:46px;height:17.5px;background:#0f0f0f;border-radius:4px;border:1px solid #262626"></div>
<div class="t" style="left:1169px;top:362.38px;font-size:11.2px;color:#e8e8e8;">1,0</div>
<svg class="a" style="left:1290px;top:355.5px;" width="10" height="6" viewBox="0 0 10 6"><path d="M1 1L5.0 5L9 1" fill="none" stroke="#c0c0c0" stroke-width="1.6"/></svg>
<svg class="a" style="left:1312px;top:353px;" width="13" height="11" viewBox="0 0 13 11"><path d="M4.5 1L1.2 4.2L4.5 7.4M1.5 4.2H8.2A3.3 3.3 0 0 1 8.2 10.2H5.5" fill="none" stroke="#d8d8d8" stroke-width="1.6"/></svg>
<div class="a" style="left:924px;top:381px;width:403px;height:27px;background:#252525;"></div>
<div class="a" style="left:924px;top:408px;width:403px;height:1px;background:#1c1c1c;"></div>
<div class="a" style="left:1045px;top:381px;width:1px;height:28px;background:#1c1c1c;"></div>
<div class="t" style="left:947.3px;top:388.23px;font-size:11.5px;color:#c8c8c8;width:2000px;overflow:hidden">Position Mode</div>
<div class="a" style="left:1054px;top:384px;width:136px;height:20px;background:#0f0f0f;border-radius:4px;border:1px solid #2a2a2a"></div>
<div class="t" style="left:1063.5px;top:388.48px;font-size:11.2px;color:#d0d0d0;">Simulation Position</div>
<svg class="a" style="left:1166px;top:391.3px;" width="10" height="6" viewBox="0 0 10 6"><path d="M1 1L5.0 5L9 1" fill="none" stroke="#d0d0d0" stroke-width="1.6"/></svg>
<div class="a" style="left:924px;top:409px;width:403px;height:27px;background:#252525;"></div>
<div class="a" style="left:924px;top:436px;width:403px;height:1px;background:#1c1c1c;"></div>
<div class="a" style="left:1045px;top:409px;width:1px;height:28px;background:#1c1c1c;"></div>
<div class="a" style="left:924px;top:409px;width:17px;height:28px;background:#212121;"></div>
<div class="a" style="left:941px;top:409px;width:1px;height:28px;background:#1a1a1a;"></div>
<svg class="a" style="left:963.3px;top:413.2px;" width="17" height="17" viewBox="0 0 17 17"><rect x="0.5" y="0.5" width="16" height="16" rx="3" fill="#0f0f0f" stroke="#363636" stroke-width="1"/></svg>
<div class="t" style="left:986px;top:415.93px;font-size:11.5px;color:#666;width:55px;overflow:hidden">Position Offset</div>
<div class="a" style="left:1060px;top:409px;width:3px;height:27px;background:#1e1e1e;"></div>
<div class="t" style="left:1070px;top:416.18px;font-size:11.2px;color:#5a5a5a;">X</div>
<div class="a" style="left:1081px;top:413px;width:54px;height:18px;background:#181818;border-radius:4px;border:1px solid #262626"></div>
<div class="t" style="left:1090px;top:416.18px;font-size:11.2px;color:#5e5e5e;">100,0</div>
<div class="t" style="left:1141px;top:416.18px;font-size:11.2px;color:#5a5a5a;">Y</div>
<div class="a" style="left:1153px;top:413px;width:54px;height:18px;background:#181818;border-radius:4px;border:1px solid #262626"></div>
<div class="t" style="left:1160.7px;top:416.18px;font-size:11.2px;color:#5e5e5e;">0,0</div>
<div class="t" style="left:1214px;top:416.18px;font-size:11.2px;color:#5a5a5a;">Z</div>
<div class="a" style="left:1224.5px;top:413px;width:54.5px;height:18px;background:#181818;border-radius:4px;border:1px solid #262626"></div>
<div class="t" style="left:1232.8px;top:416.18px;font-size:11.2px;color:#5e5e5e;">0,0</div>
<svg class="a" style="left:1290px;top:418.5px;" width="10" height="6" viewBox="0 0 10 6"><path d="M1 1L5.0 5L9 1" fill="none" stroke="#5e5e5e" stroke-width="1.6"/></svg>
<svg class="a" style="left:1312px;top:416px;" width="13" height="11" viewBox="0 0 13 11"><path d="M4.5 1L1.2 4.2L4.5 7.4M1.5 4.2H8.2A3.3 3.3 0 0 1 8.2 10.2H5.5" fill="none" stroke="#5e5e5e" stroke-width="1.6"/></svg>
<div class="a" style="left:924px;top:437px;width:403px;height:27px;background:#252525;"></div>
<div class="a" style="left:924px;top:464px;width:403px;height:1px;background:#1c1c1c;"></div>
<div class="a" style="left:1045px;top:437px;width:1px;height:28px;background:#1c1c1c;"></div>
<div class="t" style="left:947.3px;top:443.83px;font-size:11.5px;color:#c8c8c8;width:2000px;overflow:hidden">Mass Mode</div>
<div class="a" style="left:1054px;top:440px;width:136px;height:20px;background:#0f0f0f;border-radius:4px;border:1px solid #2a2a2a"></div>
<div class="t" style="left:1063.5px;top:444.08px;font-size:11.2px;color:#d0d0d0;">Unset / (Mass of 1)</div>
<svg class="a" style="left:1166px;top:446.90000000000003px;" width="10" height="6" viewBox="0 0 10 6"><path d="M1 1L5.0 5L9 1" fill="none" stroke="#d0d0d0" stroke-width="1.6"/></svg>
<div class="a" style="left:924px;top:472px;width:403px;height:21px;background:#2f2f2f;"></div>
<div class="a" style="left:1045px;top:472px;width:1px;height:21px;background:#1e1e1e;"></div>
<svg class="a" style="left:931px;top:480px;" width="10" height="6" viewBox="0 0 10 6"><path d="M0 0.5L10 0.5L5.0 6Z" fill="#9a9a9a"/></svg>
<div class="t" style="left:947.5px;top:476.23px;font-size:11.5px;color:#c8c8c8;">Sprite Attributes</div>
<div class="a" style="left:924px;top:494px;width:403px;height:28px;background:#252525;"></div>
<div class="a" style="left:924px;top:522px;width:403px;height:1px;background:#1c1c1c;"></div>
<div class="a" style="left:1045px;top:494px;width:1px;height:29px;background:#1c1c1c;"></div>
<div class="t" style="left:947.3px;top:502.12px;font-size:11.5px;color:#c8c8c8;width:2000px;overflow:hidden">Sprite Size Mode</div>
<div class="a" style="left:1054px;top:498px;width:122px;height:19.5px;background:#0f0f0f;border-radius:4px;border:1px solid #2a2a2a"></div>
<div class="t" style="left:1063.5px;top:502.38px;font-size:11.2px;color:#d0d0d0;">Random Uniform</div>
<svg class="a" style="left:1152px;top:505.2px;" width="10" height="6" viewBox="0 0 10 6"><path d="M1 1L5.0 5L9 1" fill="none" stroke="#d0d0d0" stroke-width="1.6"/></svg>
<svg class="a" style="left:1312px;top:503px;" width="13" height="11" viewBox="0 0 13 11"><path d="M4.5 1L1.2 4.2L4.5 7.4M1.5 4.2H8.2A3.3 3.3 0 0 1 8.2 10.2H5.5" fill="none" stroke="#d8d8d8" stroke-width="1.6"/></svg>
<div class="a" style="left:924px;top:523px;width:403px;height:27px;background:#252525;"></div>
<div class="a" style="left:924px;top:550px;width:403px;height:1px;background:#1c1c1c;"></div>
<div class="a" style="left:1045px;top:523px;width:1px;height:28px;background:#1c1c1c;"></div>
<div class="a" style="left:924px;top:523px;width:17px;height:28px;background:#212121;"></div>
<div class="a" style="left:941px;top:523px;width:1px;height:28px;background:#1a1a1a;"></div>
<div class="t" style="left:963.5px;top:529.93px;font-size:11.5px;color:#c8c8c8;width:77px;overflow:hidden">Uniform Sprite Size Min</div>
<div class="a" style="left:1063px;top:523px;width:3px;height:27px;background:#1e1e1e;"></div>
<div class="a" style="left:1068px;top:527px;width:108px;height:18px;background:#0f0f0f;border-radius:4px;border:1px solid #262626"></div>
<div class="t" style="left:1076.3px;top:529.78px;font-size:11.2px;color:#e8e8e8;">5,0</div>
<svg class="a" style="left:1290px;top:533.5px;" width="10" height="6" viewBox="0 0 10 6"><path d="M1 1L5.0 5L9 1" fill="none" stroke="#c0c0c0" stroke-width="1.6"/></svg>
<div class="a" style="left:924px;top:551px;width:403px;height:27px;background:#252525;"></div>
<div class="a" style="left:924px;top:578px;width:403px;height:1px;background:#1c1c1c;"></div>
<div class="a" style="left:1045px;top:551px;width:1px;height:28px;background:#1c1c1c;"></div>
<div class="a" style="left:924px;top:551px;width:17px;height:28px;background:#212121;"></div>
<div class="a" style="left:941px;top:551px;width:1px;height:28px;background:#1a1a1a;"></div>
<div class="t" style="left:963.5px;top:557.73px;font-size:11.5px;color:#c8c8c8;width:77px;overflow:hidden">Uniform Sprite Size Max</div>
<div class="a" style="left:1063px;top:551px;width:3px;height:27px;background:#1e1e1e;"></div>
<div class="a" style="left:1068px;top:555px;width:108px;height:18px;background:#0f0f0f;border-radius:4px;border:1px solid #262626"></div>
<div class="t" style="left:1076.3px;top:557.48px;font-size:11.2px;color:#e8e8e8;">10,0</div>
<svg class="a" style="left:1290px;top:561.5px;" width="10" height="6" viewBox="0 0 10 6"><path d="M1 1L5.0 5L9 1" fill="none" stroke="#c0c0c0" stroke-width="1.6"/></svg>
<div class="a" style="left:924px;top:579px;width:403px;height:27px;background:#252525;"></div>
<div class="a" style="left:924px;top:606px;width:403px;height:1px;background:#1c1c1c;"></div>
<div class="a" style="left:1045px;top:579px;width:1px;height:28px;background:#1c1c1c;"></div>
<div class="t" style="left:947.3px;top:586.12px;font-size:11.5px;color:#c8c8c8;width:93px;overflow:hidden">Sprite Rotation Mode</div>
<div class="a" style="left:1054px;top:582px;width:108px;height:19.5px;background:#0f0f0f;border-radius:4px;border:1px solid #2a2a2a"></div>
<div class="t" style="left:1063.5px;top:586.38px;font-size:11.2px;color:#d0d0d0;">Random</div>
<svg class="a" style="left:1139px;top:589.1999999999999px;" width="10" height="6" viewBox="0 0 10 6"><path d="M1 1L5.0 5L9 1" fill="none" stroke="#d0d0d0" stroke-width="1.6"/></svg>
<svg class="a" style="left:1312px;top:587px;" width="13" height="11" viewBox="0 0 13 11"><path d="M4.5 1L1.2 4.2L4.5 7.4M1.5 4.2H8.2A3.3 3.3 0 0 1 8.2 10.2H5.5" fill="none" stroke="#d8d8d8" stroke-width="1.6"/></svg>
<div class="a" style="left:924px;top:607px;width:403px;height:27px;background:#252525;"></div>
<div class="a" style="left:924px;top:634px;width:403px;height:1px;background:#1c1c1c;"></div>
<div class="a" style="left:1045px;top:607px;width:1px;height:28px;background:#1c1c1c;"></div>
<div class="t" style="left:947.3px;top:614.02px;font-size:11.5px;color:#c8c8c8;width:2000px;overflow:hidden">Sprite UV Mode</div>
<div class="a" style="left:1054px;top:610px;width:108px;height:20px;background:#0f0f0f;border-radius:4px;border:1px solid #2a2a2a"></div>
<div class="t" style="left:1063.5px;top:614.28px;font-size:11.2px;color:#d0d0d0;">Unset</div>
<svg class="a" style="left:1139px;top:617.0999999999999px;" width="10" height="6" viewBox="0 0 10 6"><path d="M1 1L5.0 5L9 1" fill="none" stroke="#d0d0d0" stroke-width="1.6"/></svg>
<div class="a" style="left:924px;top:642px;width:403px;height:21px;background:#2f2f2f;"></div>
<div class="a" style="left:1045px;top:642px;width:1px;height:21px;background:#1e1e1e;"></div>
<svg class="a" style="left:931px;top:650px;" width="10" height="6" viewBox="0 0 10 6"><path d="M0 0.5L10 0.5L5.0 6Z" fill="#9a9a9a"/></svg>
<div class="t" style="left:947.5px;top:646.12px;font-size:11.5px;color:#c8c8c8;">Mesh Attributes</div>
<div class="a" style="left:924px;top:665px;width:403px;height:27px;background:#252525;"></div>
<div class="a" style="left:924px;top:692px;width:403px;height:1px;background:#1c1c1c;"></div>
<div class="a" style="left:1045px;top:665px;width:1px;height:28px;background:#1c1c1c;"></div>
<div class="t" style="left:947.3px;top:672.23px;font-size:11.5px;color:#c8c8c8;width:2000px;overflow:hidden">Mesh Scale Mode</div>
<div class="a" style="left:1054px;top:668px;width:108px;height:20px;background:#0f0f0f;border-radius:4px;border:1px solid #2a2a2a"></div>
<div class="t" style="left:1063.5px;top:672.48px;font-size:11.2px;color:#d0d0d0;">Unset</div>
<svg class="a" style="left:1139px;top:675.3px;" width="10" height="6" viewBox="0 0 10 6"><path d="M1 1L5.0 5L9 1" fill="none" stroke="#d0d0d0" stroke-width="1.6"/></svg>
<div class="a" style="left:924px;top:693px;width:403px;height:27px;background:#252525;"></div>
<div class="a" style="left:924px;top:720px;width:403px;height:1px;background:#1c1c1c;"></div>
<div class="a" style="left:1045px;top:693px;width:1px;height:28px;background:#1c1c1c;"></div>
<div class="t" style="left:947.3px;top:699.93px;font-size:11.5px;color:#c8c8c8;width:93px;overflow:hidden">Mesh Renderer Array</div>
<div class="a" style="left:1054px;top:696px;width:108px;height:20px;background:#0f0f0f;border-radius:4px;border:1px solid #2a2a2a"></div>
<div class="t" style="left:1063.5px;top:700.18px;font-size:11.2px;color:#d0d0d0;">Unset</div>
<svg class="a" style="left:1139px;top:703.0px;" width="10" height="6" viewBox="0 0 10 6"><path d="M1 1L5.0 5L9 1" fill="none" stroke="#d0d0d0" stroke-width="1.6"/></svg>
<div class="a" style="left:924px;top:728px;width:403px;height:21px;background:#2f2f2f;"></div>
<div class="a" style="left:1045px;top:728px;width:1px;height:21px;background:#1e1e1e;"></div>
<svg class="a" style="left:931px;top:736px;" width="10" height="6" viewBox="0 0 10 6"><path d="M0 0.5L10 0.5L5.0 6Z" fill="#9a9a9a"/></svg>
<div class="t" style="left:947.5px;top:731.93px;font-size:11.5px;color:#c8c8c8;">Ribbon Attributes</div>
<div class="a" style="left:924px;top:751px;width:403px;height:27px;background:#252525;"></div>
<div class="a" style="left:924px;top:778px;width:403px;height:1px;background:#1c1c1c;"></div>
<div class="a" style="left:1045px;top:751px;width:1px;height:28px;background:#1c1c1c;"></div>
<div class="t" style="left:947.3px;top:757.83px;font-size:11.5px;color:#c8c8c8;width:93px;overflow:hidden">Ribbon Width Mode</div>
<div class="a" style="left:1054px;top:754px;width:108px;height:20px;background:#0f0f0f;border-radius:4px;border:1px solid #2a2a2a"></div>
<div class="t" style="left:1063.5px;top:758.08px;font-size:11.2px;color:#d0d0d0;">Unset</div>
<svg class="a" style="left:1139px;top:760.9px;" width="10" height="6" viewBox="0 0 10 6"><path d="M1 1L5.0 5L9 1" fill="none" stroke="#d0d0d0" stroke-width="1.6"/></svg>
<div class="a" style="left:924px;top:779px;width:403px;height:27px;background:#252525;"></div>
<div class="a" style="left:924px;top:806px;width:403px;height:1px;background:#1c1c1c;"></div>
<div class="a" style="left:1045px;top:779px;width:1px;height:28px;background:#1c1c1c;"></div>
<div class="t" style="left:947.3px;top:786.23px;font-size:11.5px;color:#c8c8c8;width:93px;overflow:hidden">Ribbon Facing Mode</div>
<div class="a" style="left:1054px;top:782px;width:108px;height:20px;background:#0f0f0f;border-radius:4px;border:1px solid #2a2a2a"></div>
<div class="t" style="left:1063.5px;top:786.48px;font-size:11.2px;color:#d0d0d0;">Unset</div>
<svg class="a" style="left:1139px;top:789.3px;" width="10" height="6" viewBox="0 0 10 6"><path d="M1 1L5.0 5L9 1" fill="none" stroke="#d0d0d0" stroke-width="1.6"/></svg>
<div class="a" style="left:924px;top:807px;width:403px;height:27px;background:#252525;"></div>
<div class="a" style="left:924px;top:834px;width:403px;height:1px;background:#1c1c1c;"></div>
<div class="a" style="left:1045px;top:807px;width:1px;height:28px;background:#1c1c1c;"></div>
<div class="t" style="left:947.3px;top:813.83px;font-size:11.5px;color:#c8c8c8;width:93px;overflow:hidden">Ribbon Twist Mode</div>
<div class="a" style="left:1054px;top:810px;width:108px;height:20px;background:#0f0f0f;border-radius:4px;border:1px solid #2a2a2a"></div>
<div class="t" style="left:1063.5px;top:814.08px;font-size:11.2px;color:#d0d0d0;">Unset</div>
<svg class="a" style="left:1139px;top:816.9px;" width="10" height="6" viewBox="0 0 10 6"><path d="M1 1L5.0 5L9 1" fill="none" stroke="#d0d0d0" stroke-width="1.6"/></svg>
<div class="a" style="left:924px;top:842px;width:403px;height:20px;background:#262626;"></div>
<svg class="a" style="left:1115px;top:849px;" width="10" height="6" viewBox="0 0 10 6"><path d="M1 1L5.0 5L9 1" fill="none" stroke="#c8c8c8" stroke-width="1.6"/></svg>
<div class="a" style="left:1332px;top:3px;width:160px;height:25px;background:#232323;border-radius:5px 5px 0 0"></div>
<div class="a" style="left:1340px;top:3px;width:145px;height:1px;background:linear-gradient(to right,rgba(50,120,200,0),rgba(60,130,210,.8) 15%,rgba(60,130,210,.8) 75%,rgba(50,120,200,0));"></div>
<svg class="a" style="left:1337px;top:9px;" width="16" height="12" viewBox="0 0 16 12"><rect x="0" y="0" width="7" height="5" fill="#9a9a9a"/><rect x="8.5" y="0" width="7" height="5" fill="#f0f0f0"/><rect x="0" y="6.5" width="7" height="5" fill="#9a9a9a"/><rect x="8.5" y="6.5" width="7" height="5" fill="#9a9a9a"/></svg>
<div class="t" style="left:1359.5px;top:6.95px;font-size:13px;color:#d8d8d8;">Preview</div>
<svg class="a" style="left:1470px;top:11px;" width="8" height="8" viewBox="0 0 8 8"><path d="M1 1L7 7M7 1L1 7" stroke="#d0d0d0" stroke-width="1.7"/></svg>
<div class="a" style="left:1332px;top:28px;width:583px;height:681px;background:radial-gradient(circle at 283px 330px,#e8f5e0 0,#d2e8c8 30px,#b9d4ae 60px,#a4bf9a 95px,#8fa38b 142px,#848f82 180px,#7c827b 215px,#777a76 250px,#747673 285px,#6f716e 318px,#6a6a6a 340px,#636363 400px,#5e5e5e 430px,#5a5a5a 560px);"></div>
<div class="a" style="left:1332px;top:28px;width:583px;height:681px;background:radial-gradient(circle at 283px 335px,rgba(255,255,255,.9) 0,rgba(245,255,240,.75) 18px,rgba(225,245,215,.35) 36px,rgba(200,230,190,0) 64px);"></div>
<svg class="a" style="left:1568px;top:326px;filter:blur(1.1px)" width="84" height="110" viewBox="0 0 84 110"><g fill="#ffffff"><path d="M30 16Q38 12 44 15Q54 11 66 13Q69 24 66 36Q62 48 56 56Q50 64 44 62Q38 58 35 50Q28 40 30 16Z"/><ellipse cx="28" cy="30" rx="3" ry="8" opacity=".8"/><ellipse cx="48" cy="66" rx="5" ry="7" transform="rotate(20 48 66)"/><ellipse cx="38" cy="64" rx="3" ry="6" transform="rotate(35 38 64)" opacity=".85"/><ellipse cx="30" cy="73" rx="2.2" ry="6" transform="rotate(50 30 73)" opacity=".9"/><ellipse cx="42" cy="78" rx="2.3" ry="6" transform="rotate(25 42 78)"/><ellipse cx="11" cy="68" rx="4" ry="1.8" transform="rotate(35 11 68)" opacity=".9"/><ellipse cx="18" cy="76" rx="2" ry="1.5" opacity=".85"/><ellipse cx="35" cy="90" rx="3.5" ry="2.6" transform="rotate(-30 35 90)"/><ellipse cx="51" cy="74" rx="2" ry="4" transform="rotate(15 51 74)" opacity=".8"/></g></svg>
<div class="a" style="left:1332px;top:28px;width:583px;height:681px;background:radial-gradient(ellipse 48px 58px at 284px 340px,rgba(255,255,255,.55) 0,rgba(240,255,235,.35) 50%,rgba(230,250,220,0) 100%);"></div>
<div class="a" style="left:1338px;top:31px;width:23px;height:24px;background:rgba(48,48,48,.78);border-radius:12px;border:1px solid rgba(20,20,20,.55)"></div>
<svg class="a" style="left:1343px;top:37px;" width="13" height="11" viewBox="0 0 13 11"><path d="M1 1.5H12M1 5.5H12M1 9.5H12" stroke="#d0d0d0" stroke-width="1.3"/></svg>
<div class="a" style="left:1369px;top:31px;width:84px;height:24px;background:rgba(48,48,48,.78);border-radius:12px;border:1px solid rgba(20,20,20,.55)"></div>
<div class="t" style="left:1377.2px;top:34.95px;font-size:13px;color:#cfcfcf;">Perspective</div>
<div class="a" style="left:1461px;top:31px;width:49px;height:24px;background:rgba(48,48,48,.78);border-radius:12px;border:1px solid rgba(20,20,20,.55)"></div>
<svg class="a" style="left:1469px;top:35px;" width="16" height="16" viewBox="0 0 16 16"><defs><radialGradient id="lg" cx="0.4" cy="0.45" r="0.6"><stop offset="0" stop-color="#6c6c6c"/><stop offset="0.75" stop-color="#8a8a8a"/><stop offset="1" stop-color="#b8b8b8"/></radialGradient></defs><circle cx="8" cy="8" r="7" fill="url(#lg)"/><circle cx="10.5" cy="5" r="1.3" fill="#e8e8e8"/></svg>
<div class="t" style="left:1489.2px;top:34.95px;font-size:13px;color:#cfcfcf;">Lit</div>
<div class="a" style="left:1518px;top:31px;width:47px;height:24px;background:rgba(48,48,48,.78);border-radius:12px;border:1px solid rgba(20,20,20,.55)"></div>
<div class="t" style="left:1526.7px;top:34.95px;font-size:13px;color:#cfcfcf;">Show</div>
<div class="a" style="left:1361px;top:655px;width:1.2px;height:24.5px;background:#2a2ad8;"></div>
<div class="a" style="left:1361px;top:678.5px;width:19px;height:1.3px;background:#c0b828;"></div>
<div class="t" style="left:1363.5px;top:649.58px;font-size:10.5px;color:#3030e0;-webkit-text-stroke:.3px #3030e0">Z</div>
<div class="t" style="left:1379px;top:675.50px;font-size:10px;color:#d02828;font-weight:bold;opacity:.8">X</div>
<div class="t" style="left:1380.5px;top:675.23px;font-size:11.5px;color:#30c030;-webkit-text-stroke:.3px #30c030">Y</div>
<div class="a" style="left:1332px;top:709px;width:583px;height:29px;background:#151515;"></div>
<div class="a" style="left:1332px;top:738px;width:583px;height:190px;background:#1a1a1a;"></div>
<div class="a" style="left:1622px;top:714px;width:143px;height:25px;background:#232323;border-radius:4px 4px 0 0"></div>
<svg class="a" style="left:1337px;top:717px;" width="17" height="16" viewBox="0 0 17 16"><path d="M6 1V9L12 5Z" fill="#d0d0d0"/><path d="M0.5 15H16.5M1 15V11.5M4 15V12.5M7 15V11.5M10 15V12.5M13 15V11.5M16 15V12.5" stroke="#d0d0d0" stroke-width="1.2"/></svg>
<div class="t" style="left:1359.4px;top:717.95px;font-size:13px;color:#c8c8c8;">Timeline</div>
<svg class="a" style="left:1481px;top:717px;" width="17" height="15" viewBox="0 0 17 15"><path d="M1.5 14Q8.5 1 15.5 14" stroke="#a8a8a8" stroke-width="1.3" fill="none"/><circle cx="2.5" cy="3.5" r="1.4" fill="#d8d8d8"/><circle cx="8.5" cy="5" r="1.4" fill="#d8d8d8"/><circle cx="14.5" cy="3.5" r="1.4" fill="#d8d8d8"/><path d="M2.5 3.5L8.5 5L14.5 3.5" stroke="#d0d0d0" stroke-width=".8"/></svg>
<div class="t" style="left:1504px;top:717.95px;font-size:13px;color:#c8c8c8;">Curves</div>
<svg class="a" style="left:1628px;top:716px;" width="14" height="17" viewBox="0 0 14 17"><rect x="1" y="3" width="12" height="13" fill="#d0d0d0"/><path d="M2.5 6.5H11.5M2.5 9H11.5M2.5 11.5H11.5M2.5 14H11.5" stroke="#1f1f1f" stroke-width="1"/><rect x="2.5" y="0.5" width="2" height="3.5" fill="#d0d0d0"/><rect x="6" y="0.5" width="2" height="3.5" fill="#d0d0d0"/><rect x="9.5" y="0.5" width="2" height="3.5" fill="#d0d0d0"/></svg>
<div class="t" style="left:1649px;top:717.95px;font-size:13px;color:#c8c8c8;">Niagara Log</div>
<svg class="a" style="left:1743px;top:721.5px;" width="8" height="8" viewBox="0 0 8 8"><path d="M1 1L7 7M7 1L1 7" stroke="#d0d0d0" stroke-width="1.7"/></svg>
<svg class="a" style="left:1772px;top:717px;" width="17" height="16" viewBox="0 0 17 16"><path d="M1 2Q1 0.5 3 0.5H12Q13.5 0.5 13.5 2V12H4V2Q4 0.5 2.5 0.5" fill="#cfcfcf"/><path d="M4 12H16Q16.5 15.5 13.5 15.5H6Q4 15.5 4 13Z" fill="#8a8a8a"/><path d="M6.5 4H11M6.5 6.5H11M6.5 9H11" stroke="#2a2a2a" stroke-width="1"/></svg>
<div class="t" style="left:1794px;top:717.95px;font-size:13px;color:#c8c8c8;">Script Stats</div>
<div class="a" style="left:1354.8px;top:762.8px;width:4.6px;height:4.6px;background:#e0e0e0;border-radius:50%"></div>
<div class="t" style="left:1370.3px;top:757.80px;font-size:13.6px;color:#c8c8c8;font-family:'Liberation Mono',monospace;transform:scaleX(.853);transform-origin:0 0">System successfully compiled.</div>
</div></body></html>
